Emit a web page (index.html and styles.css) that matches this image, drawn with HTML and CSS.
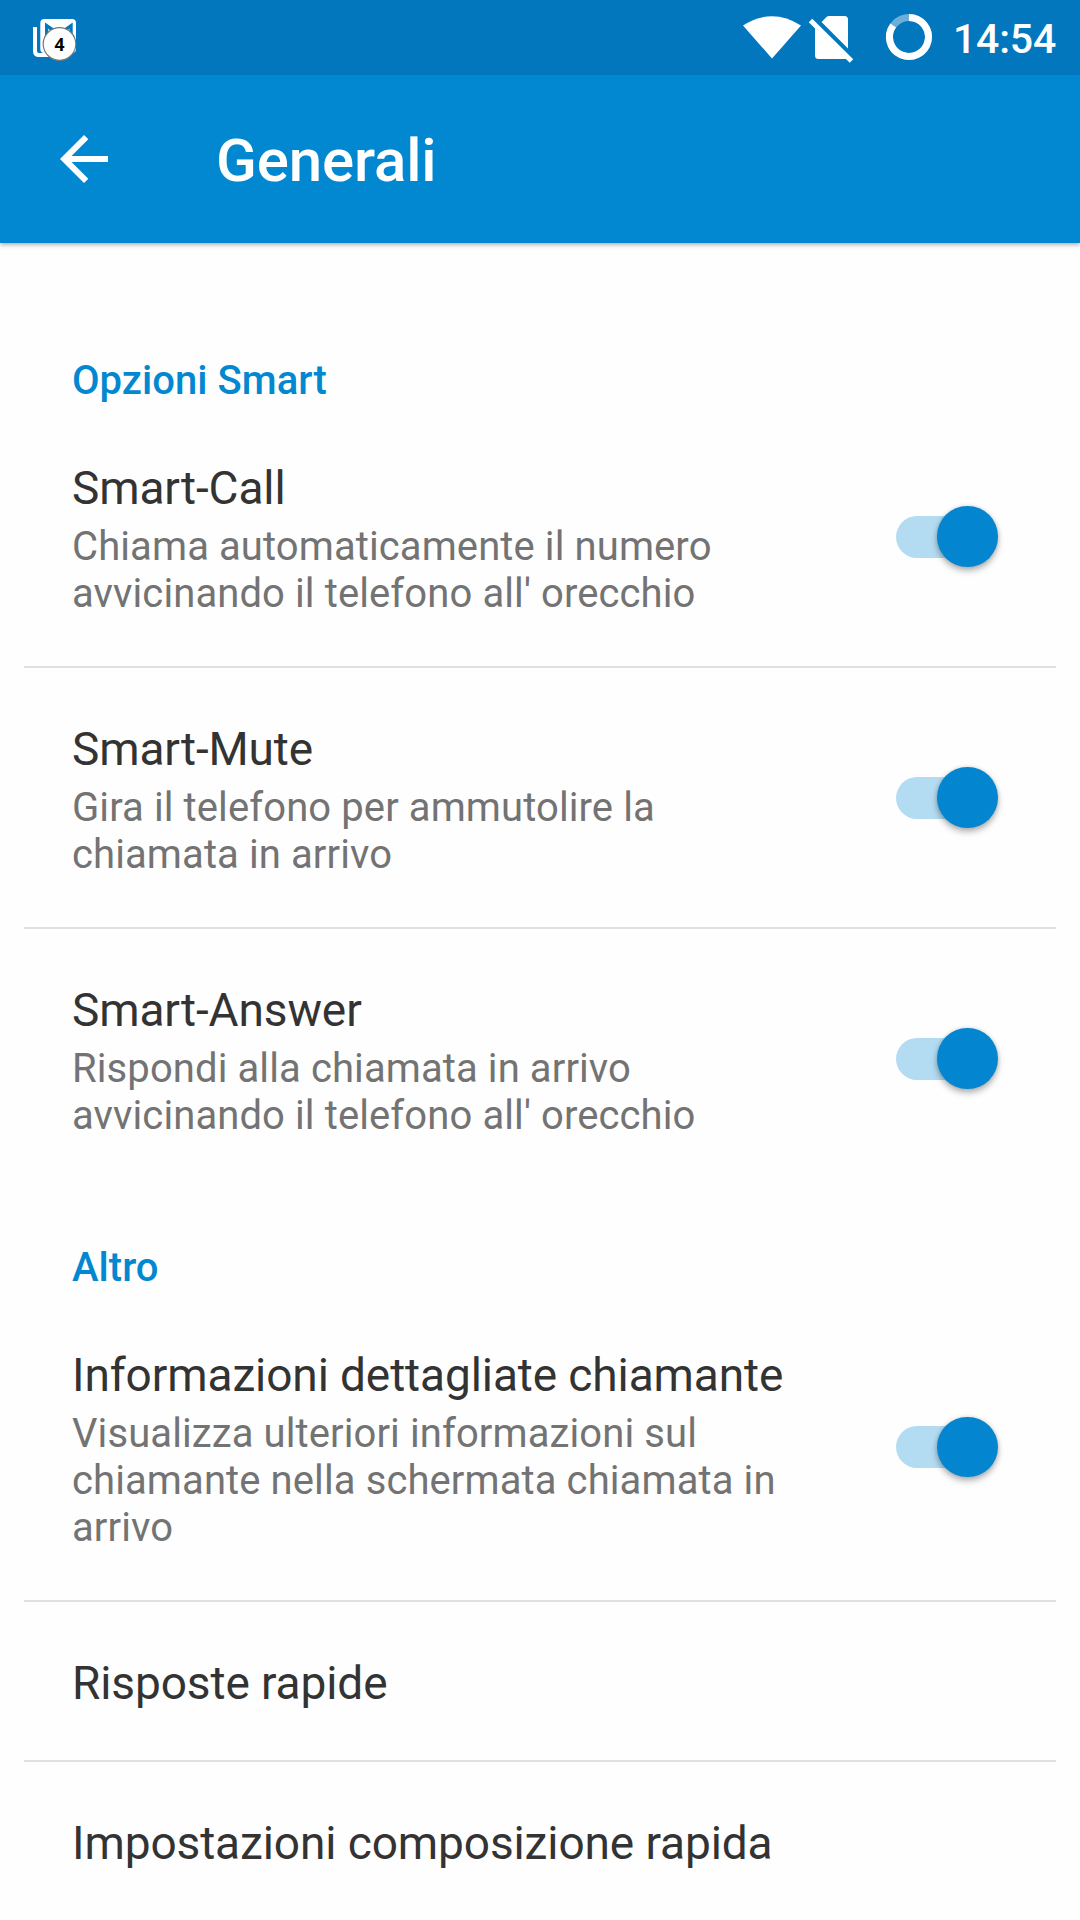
FILE: index.html
```
<!DOCTYPE html>
<html lang="it">
<head>
<meta charset="utf-8">
<title>Generali</title>
<link rel="stylesheet" href="styles.css">
</head>
<body>
<div class="status-bar">
  <svg class="notification" width="50" height="50" viewBox="0 0 50 50">
    <path d="M5 12v24q0 4 4 4h20" fill="none" stroke="#fff" stroke-width="4"/>
    <rect x="10.300" y="4" width="35.700" height="34" rx="4" fill="#fff"/>
    <path d="M15 7.500l9.500 6.500h9L42.700 7.500v18H15z" fill="#0277bd"/>
    <path d="M18.300 13.500l4 4.500-4 7zM39.400 13.500l-4 4.500 4 7z" fill="#fff"/>
    <circle cx="29.500" cy="29" r="16.300" fill="#fff" stroke="#777" stroke-width="1.200"/>
    <text class="badge-count" x="29.500" y="35.500" text-anchor="middle">4</text>
  </svg>
  <div class="status-icons">
    <svg width="350" height="75" viewBox="0 0 350 75">
      <path d="M13 25.500Q42 7 71 25.500L42 58.500z" fill="#fff"/>
      <path d="M91.500 22l5-5q1-1 2.500-1h15.500q3.500 0 3.500 3.500v29zM85 27l32.500 32H88.500q-3.500 0-3.500-3.500z" fill="#fff"/>
      <path d="M80.500 20.500l41 40.500" stroke="#fff" stroke-width="5"/>
      <circle cx="179" cy="37" r="19.500" fill="none" stroke="#fff" stroke-opacity=".42" stroke-width="7"/>
      <path d="M179 17.500A19.500 19.500 0 1 1 163.200 25.500" fill="none" stroke="#fff" stroke-width="7"/>
    </svg>
    <span class="clock">14:54</span>
  </div>
</div>
<header class="app-bar">
  <svg class="back" width="48" height="48" viewBox="0 0 48 48">
    <path d="M48 21H11.500L28.300 4.200 24 0 0 24l24 24 4.300-4.200L11.500 27H48z" fill="#fff"/>
  </svg>
  <h1 class="page-title">Generali</h1>
</header>
<main class="settings">
  <h2 class="section-title section-first">Opzioni Smart</h2>
  <div class="row">
    <div class="row-text">
      <div class="row-title">Smart-Call</div>
      <div class="row-desc">Chiama automaticamente il numero<br>avvicinando il telefono all' orecchio</div>
    </div>
    <div class="switch"><span class="thumb"></span></div>
  </div>
  <div class="row">
    <div class="row-text">
      <div class="row-title">Smart-Mute</div>
      <div class="row-desc">Gira il telefono per ammutolire la<br>chiamata in arrivo</div>
    </div>
    <div class="switch"><span class="thumb"></span></div>
  </div>
  <div class="row row-last">
    <div class="row-text">
      <div class="row-title">Smart-Answer</div>
      <div class="row-desc">Rispondi alla chiamata in arrivo<br>avvicinando il telefono all' orecchio</div>
    </div>
    <div class="switch"><span class="thumb"></span></div>
  </div>
  <h2 class="section-title">Altro</h2>
  <div class="row row-tall">
    <div class="row-text">
      <div class="row-title">Informazioni dettagliate chiamante</div>
      <div class="row-desc">Visualizza ulteriori informazioni sul<br>chiamante nella schermata chiamata in<br>arrivo</div>
    </div>
    <div class="switch"><span class="thumb"></span></div>
  </div>
  <div class="row row-single"><div class="row-title">Risposte rapide</div></div>
  <div class="row row-single row-last"><div class="row-title">Impostazioni composizione rapida</div></div>
</main>
</body>
</html>
```
FILE: styles.css
```
* { box-sizing: border-box; }
html { background: #fefefe; }
body {
  margin: 0;
  width: 1080px;
  height: 1920px;
  overflow: hidden;
  display: flex;
  flex-direction: column;
  font-family: Roboto, sans-serif;
  background: #fefefe;
}
h1, h2 { margin: 0; font-weight: 500; }
svg { display: block; flex: none; }

.status-bar {
  position: relative;
  z-index: 1;
  height: 75px;
  flex: none;
  display: flex;
  justify-content: space-between;
  background: #0277bd;
}
.notification { margin: 15px 0 0 30px; }
.badge-count { font: 700 17.5px "Noto Sans", sans-serif; fill: #000; }
.status-icons {
  width: 350px;
  display: grid;
}
.status-icons > * { grid-area: 1 / 1; }
.clock {
  justify-self: end;
  margin-right: 24px;
  color: #fff;
  font-size: 41px;
  font-weight: 500;
  letter-spacing: -0.2px;
  line-height: 79px;
}

.app-bar {
  height: 168px;
  flex: none;
  display: flex;
  align-items: center;
  padding: 0 0 0 60px;
  background: #0288d1;
  box-shadow: 0 2px 4px rgba(0, 0, 0, .3);
}
.page-title {
  margin-left: 108px;
  padding-top: 4px;
  color: #fff;
  font-size: 60px;
  letter-spacing: -0.15px;
  line-height: 70px;
}

.settings { display: flex; flex-direction: column; }
.section-title {
  height: 104px;
  padding: 54px 0 0 72px;
  flex: none;
  color: #0288d1;
  font-size: 40px;
  letter-spacing: 0.05px;
  line-height: 47px;
}
.section-first { height: 164px; padding-top: 114px; }

.row {
  height: 261px;
  flex: none;
  display: flex;
  align-items: center;
  justify-content: space-between;
  margin: 0 24px;
  padding: 0 58px 0 48px;
  border-bottom: 2px solid #e0e0e0;
}
.row-last { border-bottom-color: transparent; }
.row-tall { height: 308px; }
.row-single { height: 160px; }
.row-text { padding-top: 5px; }
.row-title {
  color: #333;
  font-size: 46px;
  letter-spacing: -0.1px;
  line-height: 54px;
}
.row-desc {
  margin-top: 8px;
  color: #737373;
  font-size: 40px;
  letter-spacing: 0.1px;
  line-height: 47px;
}
.row-single .row-title { padding-top: 4px; }
.switch {
  width: 102px;
  height: 42px;
  flex: none;
  display: flex;
  align-items: center;
  justify-content: flex-end;
  border-radius: 21px;
  background: linear-gradient(90deg, #b3dbf1 75px, transparent 75px);
}
.thumb {
  width: 60.5px;
  height: 60.5px;
  margin-right: 0.2px;
  flex: none;
  border-radius: 50%;
  background: #0386cf;
  box-shadow: 0 4px 6px rgba(0, 0, 0, .28), 0 0 4px rgba(0, 0, 0, .14);
}
```
